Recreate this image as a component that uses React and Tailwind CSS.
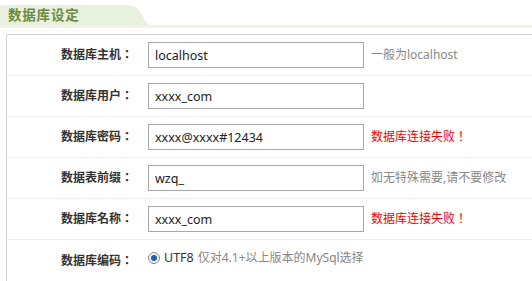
import { useState } from 'react';

const rows = [
  { label: '数据库主机：', value: 'localhost', hint: '一般为localhost' },
  { label: '数据库用户：', value: 'xxxx_com' },
  { label: '数据库密码：', value: 'xxxx@xxxx#12434', error: '数据库连接失败！' },
  { label: '数据表前缀：', value: 'wzq_', hint: '如无特殊需要,请不要修改' },
  { label: '数据库名称：', value: 'xxxx_com', error: '数据库连接失败！' },
];

const font = "font-['Noto_Sans','Noto_Sans_CJK_TC',sans-serif]";

function Row({ label, children, last }) {
  return (
    <div className={`flex items-center h-[41px] ${last ? 'h-[39px]' : 'border-b border-[#efefef]'}`}>
      <div className="w-[126px] shrink-0 text-right text-[12px] font-bold text-[#333]">{label}</div>
      <div className="flex items-center pl-[15px]">{children}</div>
    </div>
  );
}

export default function App() {
  const [values, setValues] = useState(rows.map((r) => r.value));

  return (
    <div className={`w-[532px] h-[281px] bg-white overflow-hidden ${font}`}>
      {/* header tab */}
      <div className="pt-[5px]">
        <div className="flex h-[20px]">
          <div className="bg-[#e8f0de] pl-[8px] pr-[4px] w-[126px] flex items-center text-[13.5px] font-bold text-[#6b8a3e] tracking-[0.8px] rounded-tl-[3px]">
            数据库设定
          </div>
          <svg width="26" height="20" viewBox="0 0 26 20" className="block">
            <path d="M0 0 C10 0 12 4 16 10 C19 15 21 20 26 20 L0 20 Z" fill="#e8f0de" />
          </svg>
        </div>
        <div className="h-[3px] bg-[#f1f3e7]" />
      </div>

      {/* panel */}
      <div className="mt-[6px] ml-[6px] w-[600px] border border-[#d4d4d4]">
        {rows.map((r, i) => (
          <Row key={r.label} label={r.label}>
            <input
              value={values[i]}
              onChange={(e) => setValues(values.map((v, j) => (j === i ? e.target.value : v)))}
              className="w-[216px] h-[26px] border border-[#a8a8a8] px-[6px] text-[12.5px] text-[#222] outline-none"
            />
            {r.hint && <span className="ml-[7px] text-[12px] text-[#888]">{r.hint}</span>}
            {r.error && <span className="ml-[7px] text-[12px] text-[#ee0000]">{r.error}</span>}
          </Row>
        ))}
        <Row label="数据库编码：" last>
          <label className="flex items-center text-[12px] -mt-[5px]">
            <span className="w-[12px] h-[12px] rounded-full border border-[#8a8a8a] bg-[#eef2f6] flex items-center justify-center">
              <span className="w-[6px] h-[6px] rounded-full bg-[#1f5fb0]" />
            </span>
            <span className="ml-[4px] text-[#333] text-[12.5px]">UTF8</span>
            <span className="ml-[4px] text-[#888]">仅对4.1+以上版本的MySql选择</span>
          </label>
        </Row>
      </div>
    </div>
  );
}
